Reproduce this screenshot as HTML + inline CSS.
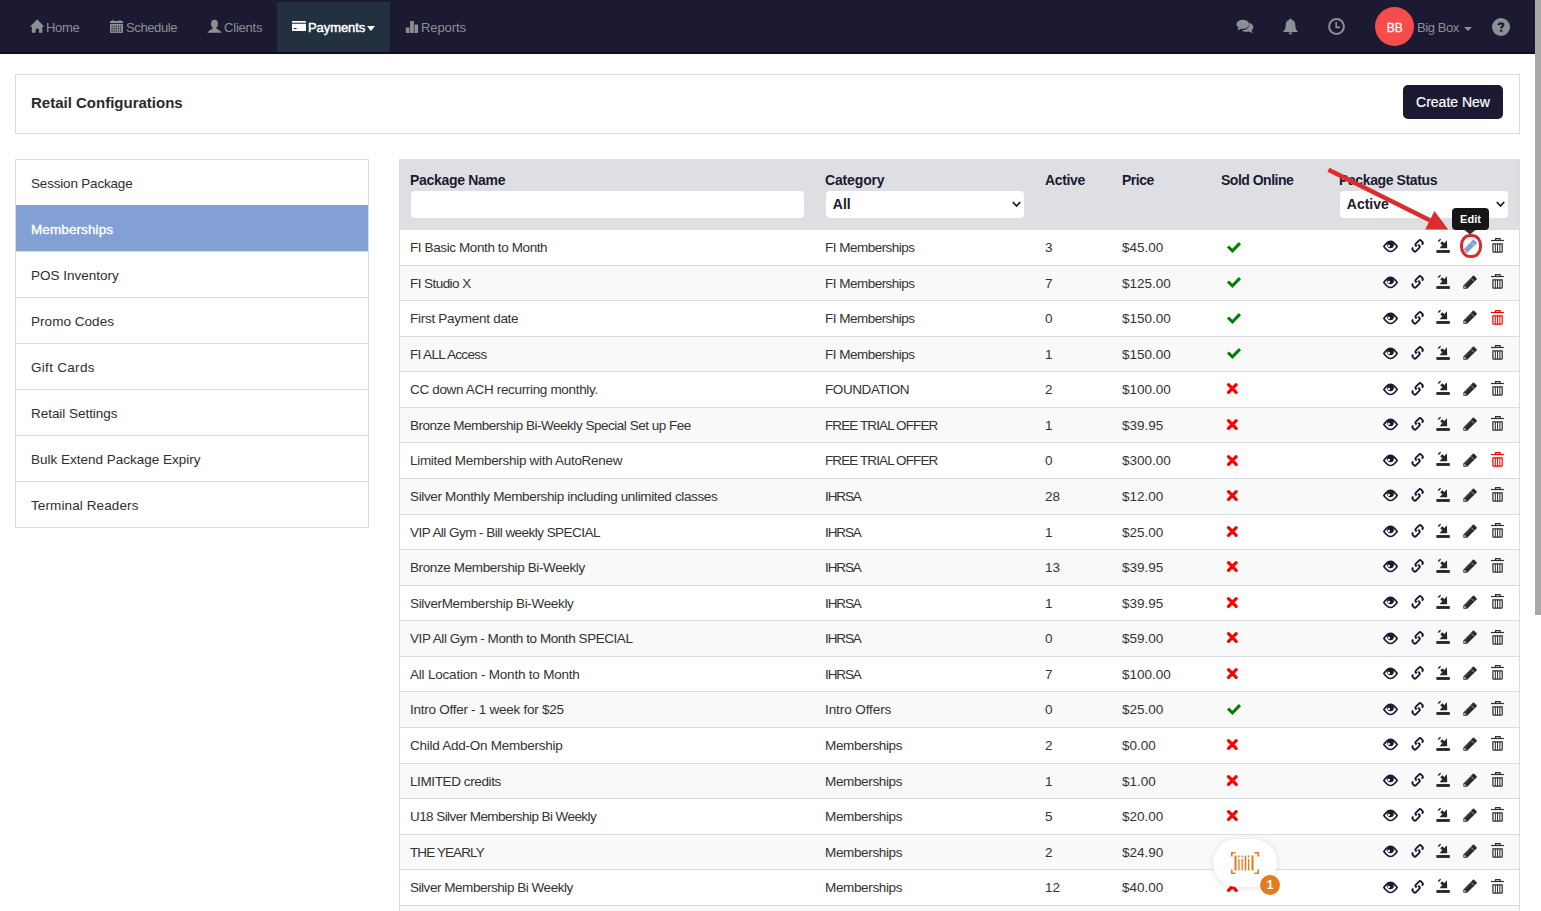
<!DOCTYPE html><html><head><meta charset="utf-8"><style>
*{box-sizing:border-box}
html,body{margin:0;padding:0}
body{width:1541px;height:911px;overflow:hidden;position:relative;background:#fff;font-family:"Liberation Sans",sans-serif;color:#333}
.abs{position:absolute}
#nav{left:0;top:0;width:1535px;height:54px;background:#1b1a32;border-bottom:2px solid #0e0d22}
#paytab{left:277px;top:2px;width:113px;height:50px;background:#22303f}
.nt{position:absolute;font-size:13px;color:#8c8f94;white-space:nowrap;line-height:16px}
#scroll{left:1535px;top:0;width:6px;height:615px;background:#a9a9a9}
#card{left:15px;top:74px;width:1505px;height:60px;border:1px solid #dcdcdc;background:#fff}
#title{left:31px;top:93px;font-size:15px;font-weight:bold;color:#2a2a2a;line-height:20px;white-space:nowrap}
#btn{left:1403px;top:85px;width:100px;height:34px;background:#1b1a32;border-radius:5px;color:#fff;font-size:14px;line-height:34px;text-align:center;-webkit-text-stroke:0.2px #fff}
#side{left:15px;top:159px;width:354px;height:369px;border:1px solid #dcdcdc}
.si{position:absolute;left:0;width:352px;height:46px;border-top:1px solid #dcdcdc;padding-left:15px;padding-top:1px;font-size:13.5px;line-height:46px;color:#2e2e2e;white-space:nowrap}
.si.act{background:#82a0d4;color:#fff;border-top-color:#82a0d4;-webkit-text-stroke:0.35px #fff}
#tbl{left:399px;top:159px;width:1121px;height:760px;border-left:1px solid #dcdcdc;border-right:1px solid #dcdcdc}
#thead{position:absolute;left:0;top:0;width:1119px;height:70.8px;background:#dedfe3}
.th{position:absolute;top:13px;font-size:14px;font-weight:bold;color:#1b1a32;line-height:16px;white-space:nowrap;letter-spacing:-0.1px}
.inp{position:absolute;top:32px;height:27px;background:#fff;border-radius:4px}
.sel{font-size:14px;font-weight:bold;color:#1b1a32;line-height:27px;padding-left:6.8px}
.row{position:absolute;left:0;width:1119px;height:35.5625px;border-top:1px solid #dcdcdc}
.row.odd{background:#f9f9f9}
.td{position:absolute;top:0;font-size:13.5px;line-height:34.5px;color:#333;white-space:nowrap}
.ic{position:absolute}
</style></head><body>
<div id="nav" class="abs"></div><div id="paytab" class="abs"></div>
<svg class="abs" style="left:29px;top:19px" width="17" height="15" viewBox="0 0 17 15"><path d="M0.95 7.65 L8.33 0.27 L15.18 7.65 L13.3 7.65 L13.3 13.84 L9.9 13.84 L9.9 9.75 L6.75 9.75 L6.75 13.84 L2.8 13.84 L2.8 7.65 Z" fill="#8c8f94"/></svg>
<div class="nt" style="left:46px;top:20px;letter-spacing:-0.3px">Home</div>
<svg class="abs" style="left:110px;top:20px" width="13" height="13" viewBox="0 0 13 13"><rect x="2.3" y="0" width="1.4" height="1.2" fill="#8c8f94"/><rect x="9.3" y="0" width="1.4" height="1.2" fill="#8c8f94"/><rect x="0" y="1.0" width="13" height="2" fill="#8c8f94"/><rect x="0" y="3.9" width="13" height="9" fill="#8c8f94"/><g fill="#1b1a32" opacity="0.75"><rect x="1.40" y="5.7" width="1.3" height="1.5"/><rect x="1.40" y="8.0" width="1.3" height="1.5"/><rect x="1.40" y="10.3" width="1.3" height="1.5"/><rect x="3.55" y="5.7" width="1.3" height="1.5"/><rect x="3.55" y="8.0" width="1.3" height="1.5"/><rect x="3.55" y="10.3" width="1.3" height="1.5"/><rect x="5.70" y="5.7" width="1.3" height="1.5"/><rect x="5.70" y="8.0" width="1.3" height="1.5"/><rect x="5.70" y="10.3" width="1.3" height="1.5"/><rect x="7.85" y="5.7" width="1.3" height="1.5"/><rect x="7.85" y="8.0" width="1.3" height="1.5"/><rect x="7.85" y="10.3" width="1.3" height="1.5"/><rect x="10.00" y="5.7" width="1.3" height="1.5"/><rect x="10.00" y="8.0" width="1.3" height="1.5"/><rect x="10.00" y="10.3" width="1.3" height="1.5"/></g></svg>
<div class="nt" style="left:126px;top:20px;letter-spacing:-0.39px">Schedule</div>
<svg class="abs" style="left:207px;top:19px" width="15" height="14" viewBox="0 0 15 14"><ellipse cx="7.5" cy="4.9" rx="3.4" ry="4.1" fill="#8c8f94"/><rect x="5.6" y="7" width="3.8" height="3.5" fill="#8c8f94"/><path d="M0.6 13.8 L0.7 13.1 L4.6 9.9 L10.4 9.9 L14.3 13.1 L14.4 13.8 Z" fill="#8c8f94"/></svg>
<div class="nt" style="left:224px;top:20px;letter-spacing:-0.2px">Clients</div>
<svg class="abs" style="left:292px;top:21px" width="14" height="10" viewBox="0 0 14 10"><rect x="0" y="0" width="14" height="10" rx="0.6" fill="#fff"/><rect x="0" y="1.6" width="14" height="1.3" fill="#22303f" opacity="0.85"/><rect x="1.6" y="7" width="3" height="1.1" fill="#22303f"/></svg>
<div class="nt" style="left:308px;top:20px;color:#fff;font-weight:normal;-webkit-text-stroke:0.45px #fff;letter-spacing:-0.07px">Payments</div>
<svg class="abs" style="left:367px;top:26px" width="8" height="5" viewBox="0 0 8 5"><path d="M0 0 H8 L4 5 Z" fill="#fff"/></svg>
<svg class="abs" style="left:405px;top:20px" width="14" height="13" viewBox="0 0 14 13"><rect x="0.8" y="7.5" width="3.7" height="5.4" rx="0.6" fill="#8c8f94"/><rect x="5.1" y="0.9" width="3.7" height="12" rx="0.6" fill="#8c8f94"/><rect x="9.4" y="4.4" width="3.7" height="8.5" rx="0.6" fill="#8c8f94"/></svg>
<div class="nt" style="left:421px;top:20px;letter-spacing:-0.08px">Reports</div>
<svg class="abs" style="left:1236px;top:18.5px" width="18" height="15" viewBox="0 0 18 15"><ellipse cx="6.8" cy="5.3" rx="6.3" ry="4.6" fill="#8c8f94"/><path d="M2.5 8.5 L1.5 11.5 L5.5 9.5 Z" fill="#8c8f94"/><path d="M13.3 3.8 C15.8 4.6 17.3 6.4 17.3 8.3 C17.3 9.6 16.6 10.8 15.4 11.6 L16.6 14.2 L12.9 12.4 C12 12.7 11 12.8 10 12.8 C8.3 12.8 6.7 12.3 5.6 11.5 C10.5 11.3 13.8 8.5 13.3 3.8 Z" fill="#8c8f94"/></svg>
<svg class="abs" style="left:1282px;top:18px" width="17" height="17" viewBox="0 0 17 17"><path d="M8.5 0.4 C9.1 0.4 9.4 0.9 9.4 1.4 C12 2 13.3 4 13.3 7 C13.3 10.5 14.2 12.3 16.4 14 L0.6 14 C2.8 12.3 3.7 10.5 3.7 7 C3.7 4 5 2 7.6 1.4 C7.6 0.9 7.9 0.4 8.5 0.4 Z" fill="#8c8f94"/><path d="M6.6 14.6 C6.8 15.8 7.6 16.5 8.5 16.5 C9.4 16.5 10.2 15.8 10.4 14.6 Z" fill="#8c8f94"/></svg>
<svg class="abs" style="left:1328px;top:18px" width="17" height="17" viewBox="0 0 17 17"><circle cx="8.5" cy="8.5" r="7.4" fill="none" stroke="#8c8f94" stroke-width="2"/><path d="M8.2 4 V9.4 H12" fill="none" stroke="#8c8f94" stroke-width="1.6"/></svg>
<div class="abs" style="left:1375px;top:7px;width:39px;height:39px;border-radius:50%;background:#f44d4b"></div>
<div class="abs" style="left:1375px;top:8.5px;width:39.5px;line-height:39px;text-align:center;color:#fff;font-size:12px;letter-spacing:0px;-webkit-text-stroke:0.3px #fff">BB</div>
<div class="nt" style="left:1417px;top:20px;letter-spacing:-0.43px">Big Box</div>
<svg class="abs" style="left:1464px;top:27px" width="8" height="4" viewBox="0 0 8 4"><path d="M0 0 H8 L4 4 Z" fill="#8c8f94"/></svg>
<svg class="abs" style="left:1492px;top:18px" width="18" height="18" viewBox="0 0 18 18"><circle cx="9" cy="9" r="9" fill="#8c8f94"/><path d="M6.5 7.2 C6.6 5.9 7.7 5.3 9 5.3 C10.4 5.3 11.3 6 11.3 7 C11.3 8.3 9.3 8.5 9.1 10.3" fill="none" stroke="#1b1a32" stroke-width="2.2"/><rect x="7.9" y="11.8" width="2.5" height="1.9" fill="#1b1a32"/></svg>
<div id="scroll" class="abs"></div>
<div id="card" class="abs"></div><div id="title" class="abs">Retail Configurations</div>
<div id="btn" class="abs">Create New</div>
<div id="side" class="abs">
<div class="si" style="top:-1px;letter-spacing:-0.19px;border-top-color:transparent">Session Package</div>
<div class="si act" style="top:45px;letter-spacing:0.1px">Memberships</div>
<div class="si" style="top:91px;letter-spacing:0px">POS Inventory</div>
<div class="si" style="top:137px;letter-spacing:0.04px">Promo Codes</div>
<div class="si" style="top:183px;letter-spacing:0.3px">Gift Cards</div>
<div class="si" style="top:229px;letter-spacing:-0.04px">Retail Settings</div>
<div class="si" style="top:275px;letter-spacing:0px">Bulk Extend Package Expiry</div>
<div class="si" style="top:321px;letter-spacing:0.11px">Terminal Readers</div>
</div>
<div id="tbl" class="abs">
<div id="thead">
<div class="th" style="left:10px;letter-spacing:-0.3px">Package Name</div>
<div class="th" style="left:425px;letter-spacing:-0.15px">Category</div>
<div class="th" style="left:645px;letter-spacing:-0.36px">Active</div>
<div class="th" style="left:722px;letter-spacing:-0.5px">Price</div>
<div class="th" style="left:821px;letter-spacing:-0.5px">Sold Online</div>
<div class="th" style="left:939px;letter-spacing:-0.39px">Package Status</div>
<div class="inp" style="left:11px;width:393px"></div>
<div class="inp sel" style="left:426px;width:198px">All</div>
<svg class="abs" style="left:612px;top:42px" width="9" height="7" viewBox="0 0 9 7"><path d="M0.8 1 L4.5 5 L8.2 1" fill="none" stroke="#1b1a32" stroke-width="1.8"/></svg>
<div class="inp sel" style="left:940px;width:168px">Active</div>
<svg class="abs" style="left:1096px;top:42px" width="9" height="7" viewBox="0 0 9 7"><path d="M0.8 1 L4.5 5 L8.2 1" fill="none" stroke="#1b1a32" stroke-width="1.8"/></svg>
</div>
<div class="row" style="top:70.800px;border-top-color:transparent">
<div class="td" style="left:10px;top:0px;letter-spacing:-0.395px">FI Basic Month to Month</div>
<div class="td" style="left:425px;top:0px;letter-spacing:-0.515px">FI Memberships</div>
<div class="td" style="left:645px;top:0px;letter-spacing:0px">3</div>
<div class="td" style="left:722px;top:0px;letter-spacing:0px">$45.00</div>
<svg class="ic" style="left:822px;top:4.90px" width="20" height="20" viewBox="0 0 20 20"><path d="M4.9 11.4 L7.0 9.5 L10.4 12.8 L16.8 6.1 L19 8.3 L10.4 16.9 Z" fill="#008000"/></svg>
<svg class="ic" style="left:982px;top:9.60px" width="17" height="13" viewBox="0 0 17 13"><path d="M1.8 6.5 C4 3.5 6 1.42 8.5 1.42 C11 1.42 13 3.5 15.2 6.5 C13 9.5 11 11.57 8.5 11.57 C6 11.57 4 9.5 1.8 6.5 Z" fill="none" stroke="#1b1a32" stroke-width="1.6" stroke-linejoin="round"/><circle cx="8.5" cy="4.8" r="3.4" fill="#1b1a32"/><circle cx="6.9" cy="5.9" r="1.1" fill="#fff"/></svg>
<svg class="ic" style="left:1010px;top:8.60px" width="15" height="15" viewBox="0 0 15 15"><g fill="none" stroke="#1b1a32" stroke-width="1.6" stroke-linecap="butt" transform="translate(7.58 7.41) scale(1.2) translate(-7.5 -7.73)"><path d="M6.72 7.78 L6.14 7.20 Q5.22 6.28 6.14 5.36 L8.62 2.89 Q9.54 1.97 10.46 2.89 L11.47 3.90 Q12.39 4.82 11.47 5.74 L11.00 6.20"/><path d="M8.00 6.29 L8.87 7.15 Q9.79 8.06 8.87 8.98 L6.23 11.62 Q5.31 12.54 4.39 11.62 L3.54 10.77 Q2.62 9.85 3.54 8.93 L3.84 8.64"/></g></svg>
<svg class="ic" style="left:1034px;top:5.30px" width="18" height="18" viewBox="0 0 18 18"><g fill="#262626"><path d="M3.7 5.1 L6.1 2.7 L7.1 3.7 L4.7 6.1 Z"/><path d="M6.26 7.35 L8.38 5.23 L10.58 7.43 L8.46 9.55 Z"/><path d="M12.9 4.3 L13.2 12.2 L5.5 12.2 Z"/><rect x="2.4" y="14.05" width="13.4" height="2.85"/></g></svg>
<svg class="ic" style="left:1060px;top:5.50px" width="18" height="18" viewBox="0 0 18 18"><path d="M3.4 13.4 L12.9 3.8 Q13.5 3.3 14.1 3.8 L16.6 6.3 Q17.1 6.9 16.6 7.5 L7.2 16.8 L3.4 16.8 Z" fill="#7f9fd9"/><path d="M11.1 6.4 L14.1 9.4" stroke="#fff" stroke-width="0.7" opacity="0.8"/><path d="M5.4 12.8 L11 7.2" stroke="#fff" stroke-width="0.6" stroke-dasharray="0.8 0.8" opacity="0.6"/><path d="M4.3 13.6 L6.5 15.8 L4.3 15.8 Z" fill="#fff" opacity="0.9"/></svg>
<svg class="ic" style="left:1087px;top:3.60px" width="20" height="20" viewBox="0 0 20 20"><g fill="none" stroke="#2e2e2e" stroke-width="1.2"><path d="M4.0 6.5 H16.9"/><path d="M8.6 6.5 V4.6 H13.1 V6.5"/><path d="M5.9 9.8 H15.2 V17.4 Q15.2 18.1 14.5 18.1 H6.6 Q5.9 18.1 5.9 17.4 Z"/><path d="M8.3 10 V18 M10.55 10 V18 M12.85 10 V18" stroke-width="1"/></g></svg>
</div>
<div class="row odd" style="top:105.662px">
<div class="td" style="left:10px;top:1px;letter-spacing:-0.56px">FI Studio X</div>
<div class="td" style="left:425px;top:1px;letter-spacing:-0.515px">FI Memberships</div>
<div class="td" style="left:645px;top:1px;letter-spacing:0px">7</div>
<div class="td" style="left:722px;top:1px;letter-spacing:0px">$125.00</div>
<svg class="ic" style="left:822px;top:5.60px" width="20" height="20" viewBox="0 0 20 20"><path d="M4.9 11.4 L7.0 9.5 L10.4 12.8 L16.8 6.1 L19 8.3 L10.4 16.9 Z" fill="#008000"/></svg>
<svg class="ic" style="left:982px;top:10.30px" width="17" height="13" viewBox="0 0 17 13"><path d="M1.8 6.5 C4 3.5 6 1.42 8.5 1.42 C11 1.42 13 3.5 15.2 6.5 C13 9.5 11 11.57 8.5 11.57 C6 11.57 4 9.5 1.8 6.5 Z" fill="none" stroke="#1b1a32" stroke-width="1.6" stroke-linejoin="round"/><circle cx="8.5" cy="4.8" r="3.4" fill="#1b1a32"/><circle cx="6.9" cy="5.9" r="1.1" fill="#fff"/></svg>
<svg class="ic" style="left:1010px;top:9.30px" width="15" height="15" viewBox="0 0 15 15"><g fill="none" stroke="#1b1a32" stroke-width="1.6" stroke-linecap="butt" transform="translate(7.58 7.41) scale(1.2) translate(-7.5 -7.73)"><path d="M6.72 7.78 L6.14 7.20 Q5.22 6.28 6.14 5.36 L8.62 2.89 Q9.54 1.97 10.46 2.89 L11.47 3.90 Q12.39 4.82 11.47 5.74 L11.00 6.20"/><path d="M8.00 6.29 L8.87 7.15 Q9.79 8.06 8.87 8.98 L6.23 11.62 Q5.31 12.54 4.39 11.62 L3.54 10.77 Q2.62 9.85 3.54 8.93 L3.84 8.64"/></g></svg>
<svg class="ic" style="left:1034px;top:6.00px" width="18" height="18" viewBox="0 0 18 18"><g fill="#262626"><path d="M3.7 5.1 L6.1 2.7 L7.1 3.7 L4.7 6.1 Z"/><path d="M6.26 7.35 L8.38 5.23 L10.58 7.43 L8.46 9.55 Z"/><path d="M12.9 4.3 L13.2 12.2 L5.5 12.2 Z"/><rect x="2.4" y="14.05" width="13.4" height="2.85"/></g></svg>
<svg class="ic" style="left:1060px;top:6.20px" width="18" height="18" viewBox="0 0 18 18"><path d="M3.4 13.4 L12.9 3.8 Q13.5 3.3 14.1 3.8 L16.6 6.3 Q17.1 6.9 16.6 7.5 L7.2 16.8 L3.4 16.8 Z" fill="#2b2b2b"/><path d="M11.1 6.4 L14.1 9.4" stroke="#fff" stroke-width="0.7" opacity="0.8"/><path d="M5.4 12.8 L11 7.2" stroke="#fff" stroke-width="0.6" stroke-dasharray="0.8 0.8" opacity="0.6"/><path d="M4.3 13.6 L6.5 15.8 L4.3 15.8 Z" fill="#fff" opacity="0.9"/></svg>
<svg class="ic" style="left:1087px;top:4.30px" width="20" height="20" viewBox="0 0 20 20"><g fill="none" stroke="#2e2e2e" stroke-width="1.2"><path d="M4.0 6.5 H16.9"/><path d="M8.6 6.5 V4.6 H13.1 V6.5"/><path d="M5.9 9.8 H15.2 V17.4 Q15.2 18.1 14.5 18.1 H6.6 Q5.9 18.1 5.9 17.4 Z"/><path d="M8.3 10 V18 M10.55 10 V18 M12.85 10 V18" stroke-width="1"/></g></svg>
</div>
<div class="row" style="top:141.225px">
<div class="td" style="left:10px;top:1px;letter-spacing:-0.276px">First Payment date</div>
<div class="td" style="left:425px;top:1px;letter-spacing:-0.515px">FI Memberships</div>
<div class="td" style="left:645px;top:1px;letter-spacing:0px">0</div>
<div class="td" style="left:722px;top:1px;letter-spacing:0px">$150.00</div>
<svg class="ic" style="left:822px;top:5.60px" width="20" height="20" viewBox="0 0 20 20"><path d="M4.9 11.4 L7.0 9.5 L10.4 12.8 L16.8 6.1 L19 8.3 L10.4 16.9 Z" fill="#008000"/></svg>
<svg class="ic" style="left:982px;top:10.30px" width="17" height="13" viewBox="0 0 17 13"><path d="M1.8 6.5 C4 3.5 6 1.42 8.5 1.42 C11 1.42 13 3.5 15.2 6.5 C13 9.5 11 11.57 8.5 11.57 C6 11.57 4 9.5 1.8 6.5 Z" fill="none" stroke="#1b1a32" stroke-width="1.6" stroke-linejoin="round"/><circle cx="8.5" cy="4.8" r="3.4" fill="#1b1a32"/><circle cx="6.9" cy="5.9" r="1.1" fill="#fff"/></svg>
<svg class="ic" style="left:1010px;top:9.30px" width="15" height="15" viewBox="0 0 15 15"><g fill="none" stroke="#1b1a32" stroke-width="1.6" stroke-linecap="butt" transform="translate(7.58 7.41) scale(1.2) translate(-7.5 -7.73)"><path d="M6.72 7.78 L6.14 7.20 Q5.22 6.28 6.14 5.36 L8.62 2.89 Q9.54 1.97 10.46 2.89 L11.47 3.90 Q12.39 4.82 11.47 5.74 L11.00 6.20"/><path d="M8.00 6.29 L8.87 7.15 Q9.79 8.06 8.87 8.98 L6.23 11.62 Q5.31 12.54 4.39 11.62 L3.54 10.77 Q2.62 9.85 3.54 8.93 L3.84 8.64"/></g></svg>
<svg class="ic" style="left:1034px;top:6.00px" width="18" height="18" viewBox="0 0 18 18"><g fill="#262626"><path d="M3.7 5.1 L6.1 2.7 L7.1 3.7 L4.7 6.1 Z"/><path d="M6.26 7.35 L8.38 5.23 L10.58 7.43 L8.46 9.55 Z"/><path d="M12.9 4.3 L13.2 12.2 L5.5 12.2 Z"/><rect x="2.4" y="14.05" width="13.4" height="2.85"/></g></svg>
<svg class="ic" style="left:1060px;top:6.20px" width="18" height="18" viewBox="0 0 18 18"><path d="M3.4 13.4 L12.9 3.8 Q13.5 3.3 14.1 3.8 L16.6 6.3 Q17.1 6.9 16.6 7.5 L7.2 16.8 L3.4 16.8 Z" fill="#2b2b2b"/><path d="M11.1 6.4 L14.1 9.4" stroke="#fff" stroke-width="0.7" opacity="0.8"/><path d="M5.4 12.8 L11 7.2" stroke="#fff" stroke-width="0.6" stroke-dasharray="0.8 0.8" opacity="0.6"/><path d="M4.3 13.6 L6.5 15.8 L4.3 15.8 Z" fill="#fff" opacity="0.9"/></svg>
<svg class="ic" style="left:1087px;top:4.30px" width="20" height="20" viewBox="0 0 20 20"><g fill="none" stroke="#ff0000" stroke-width="1.2"><path d="M4.0 6.5 H16.9"/><path d="M8.6 6.5 V4.6 H13.1 V6.5"/><path d="M5.9 9.8 H15.2 V17.4 Q15.2 18.1 14.5 18.1 H6.6 Q5.9 18.1 5.9 17.4 Z"/><path d="M8.3 10 V18 M10.55 10 V18 M12.85 10 V18" stroke-width="1"/></g></svg>
</div>
<div class="row odd" style="top:176.787px">
<div class="td" style="left:10px;top:1px;letter-spacing:-0.658px">FI ALL Access</div>
<div class="td" style="left:425px;top:1px;letter-spacing:-0.515px">FI Memberships</div>
<div class="td" style="left:645px;top:1px;letter-spacing:0px">1</div>
<div class="td" style="left:722px;top:1px;letter-spacing:0px">$150.00</div>
<svg class="ic" style="left:822px;top:5.60px" width="20" height="20" viewBox="0 0 20 20"><path d="M4.9 11.4 L7.0 9.5 L10.4 12.8 L16.8 6.1 L19 8.3 L10.4 16.9 Z" fill="#008000"/></svg>
<svg class="ic" style="left:982px;top:10.30px" width="17" height="13" viewBox="0 0 17 13"><path d="M1.8 6.5 C4 3.5 6 1.42 8.5 1.42 C11 1.42 13 3.5 15.2 6.5 C13 9.5 11 11.57 8.5 11.57 C6 11.57 4 9.5 1.8 6.5 Z" fill="none" stroke="#1b1a32" stroke-width="1.6" stroke-linejoin="round"/><circle cx="8.5" cy="4.8" r="3.4" fill="#1b1a32"/><circle cx="6.9" cy="5.9" r="1.1" fill="#fff"/></svg>
<svg class="ic" style="left:1010px;top:9.30px" width="15" height="15" viewBox="0 0 15 15"><g fill="none" stroke="#1b1a32" stroke-width="1.6" stroke-linecap="butt" transform="translate(7.58 7.41) scale(1.2) translate(-7.5 -7.73)"><path d="M6.72 7.78 L6.14 7.20 Q5.22 6.28 6.14 5.36 L8.62 2.89 Q9.54 1.97 10.46 2.89 L11.47 3.90 Q12.39 4.82 11.47 5.74 L11.00 6.20"/><path d="M8.00 6.29 L8.87 7.15 Q9.79 8.06 8.87 8.98 L6.23 11.62 Q5.31 12.54 4.39 11.62 L3.54 10.77 Q2.62 9.85 3.54 8.93 L3.84 8.64"/></g></svg>
<svg class="ic" style="left:1034px;top:6.00px" width="18" height="18" viewBox="0 0 18 18"><g fill="#262626"><path d="M3.7 5.1 L6.1 2.7 L7.1 3.7 L4.7 6.1 Z"/><path d="M6.26 7.35 L8.38 5.23 L10.58 7.43 L8.46 9.55 Z"/><path d="M12.9 4.3 L13.2 12.2 L5.5 12.2 Z"/><rect x="2.4" y="14.05" width="13.4" height="2.85"/></g></svg>
<svg class="ic" style="left:1060px;top:6.20px" width="18" height="18" viewBox="0 0 18 18"><path d="M3.4 13.4 L12.9 3.8 Q13.5 3.3 14.1 3.8 L16.6 6.3 Q17.1 6.9 16.6 7.5 L7.2 16.8 L3.4 16.8 Z" fill="#2b2b2b"/><path d="M11.1 6.4 L14.1 9.4" stroke="#fff" stroke-width="0.7" opacity="0.8"/><path d="M5.4 12.8 L11 7.2" stroke="#fff" stroke-width="0.6" stroke-dasharray="0.8 0.8" opacity="0.6"/><path d="M4.3 13.6 L6.5 15.8 L4.3 15.8 Z" fill="#fff" opacity="0.9"/></svg>
<svg class="ic" style="left:1087px;top:4.30px" width="20" height="20" viewBox="0 0 20 20"><g fill="none" stroke="#2e2e2e" stroke-width="1.2"><path d="M4.0 6.5 H16.9"/><path d="M8.6 6.5 V4.6 H13.1 V6.5"/><path d="M5.9 9.8 H15.2 V17.4 Q15.2 18.1 14.5 18.1 H6.6 Q5.9 18.1 5.9 17.4 Z"/><path d="M8.3 10 V18 M10.55 10 V18 M12.85 10 V18" stroke-width="1"/></g></svg>
</div>
<div class="row" style="top:212.350px">
<div class="td" style="left:10px;top:1px;letter-spacing:-0.334px">CC down ACH recurring monthly.</div>
<div class="td" style="left:425px;top:1px;letter-spacing:-0.411px">FOUNDATION</div>
<div class="td" style="left:645px;top:1px;letter-spacing:0px">2</div>
<div class="td" style="left:722px;top:1px;letter-spacing:0px">$100.00</div>
<svg class="ic" style="left:822px;top:6.10px" width="20" height="20" viewBox="0 0 20 20"><path d="M6.5 6.7 L14.2 14.4 M14.2 6.7 L6.5 14.4" fill="none" stroke="#ff0000" stroke-width="3.2" stroke-linecap="round"/></svg>
<svg class="ic" style="left:982px;top:10.30px" width="17" height="13" viewBox="0 0 17 13"><path d="M1.8 6.5 C4 3.5 6 1.42 8.5 1.42 C11 1.42 13 3.5 15.2 6.5 C13 9.5 11 11.57 8.5 11.57 C6 11.57 4 9.5 1.8 6.5 Z" fill="none" stroke="#1b1a32" stroke-width="1.6" stroke-linejoin="round"/><circle cx="8.5" cy="4.8" r="3.4" fill="#1b1a32"/><circle cx="6.9" cy="5.9" r="1.1" fill="#fff"/></svg>
<svg class="ic" style="left:1010px;top:9.30px" width="15" height="15" viewBox="0 0 15 15"><g fill="none" stroke="#1b1a32" stroke-width="1.6" stroke-linecap="butt" transform="translate(7.58 7.41) scale(1.2) translate(-7.5 -7.73)"><path d="M6.72 7.78 L6.14 7.20 Q5.22 6.28 6.14 5.36 L8.62 2.89 Q9.54 1.97 10.46 2.89 L11.47 3.90 Q12.39 4.82 11.47 5.74 L11.00 6.20"/><path d="M8.00 6.29 L8.87 7.15 Q9.79 8.06 8.87 8.98 L6.23 11.62 Q5.31 12.54 4.39 11.62 L3.54 10.77 Q2.62 9.85 3.54 8.93 L3.84 8.64"/></g></svg>
<svg class="ic" style="left:1034px;top:6.00px" width="18" height="18" viewBox="0 0 18 18"><g fill="#262626"><path d="M3.7 5.1 L6.1 2.7 L7.1 3.7 L4.7 6.1 Z"/><path d="M6.26 7.35 L8.38 5.23 L10.58 7.43 L8.46 9.55 Z"/><path d="M12.9 4.3 L13.2 12.2 L5.5 12.2 Z"/><rect x="2.4" y="14.05" width="13.4" height="2.85"/></g></svg>
<svg class="ic" style="left:1060px;top:6.20px" width="18" height="18" viewBox="0 0 18 18"><path d="M3.4 13.4 L12.9 3.8 Q13.5 3.3 14.1 3.8 L16.6 6.3 Q17.1 6.9 16.6 7.5 L7.2 16.8 L3.4 16.8 Z" fill="#2b2b2b"/><path d="M11.1 6.4 L14.1 9.4" stroke="#fff" stroke-width="0.7" opacity="0.8"/><path d="M5.4 12.8 L11 7.2" stroke="#fff" stroke-width="0.6" stroke-dasharray="0.8 0.8" opacity="0.6"/><path d="M4.3 13.6 L6.5 15.8 L4.3 15.8 Z" fill="#fff" opacity="0.9"/></svg>
<svg class="ic" style="left:1087px;top:4.30px" width="20" height="20" viewBox="0 0 20 20"><g fill="none" stroke="#2e2e2e" stroke-width="1.2"><path d="M4.0 6.5 H16.9"/><path d="M8.6 6.5 V4.6 H13.1 V6.5"/><path d="M5.9 9.8 H15.2 V17.4 Q15.2 18.1 14.5 18.1 H6.6 Q5.9 18.1 5.9 17.4 Z"/><path d="M8.3 10 V18 M10.55 10 V18 M12.85 10 V18" stroke-width="1"/></g></svg>
</div>
<div class="row odd" style="top:247.912px">
<div class="td" style="left:10px;top:1px;letter-spacing:-0.478px">Bronze Membership Bi-Weekly Special Set up Fee</div>
<div class="td" style="left:425px;top:1px;letter-spacing:-0.9px">FREE TRIAL OFFER</div>
<div class="td" style="left:645px;top:1px;letter-spacing:0px">1</div>
<div class="td" style="left:722px;top:1px;letter-spacing:0px">$39.95</div>
<svg class="ic" style="left:822px;top:6.10px" width="20" height="20" viewBox="0 0 20 20"><path d="M6.5 6.7 L14.2 14.4 M14.2 6.7 L6.5 14.4" fill="none" stroke="#ff0000" stroke-width="3.2" stroke-linecap="round"/></svg>
<svg class="ic" style="left:982px;top:10.30px" width="17" height="13" viewBox="0 0 17 13"><path d="M1.8 6.5 C4 3.5 6 1.42 8.5 1.42 C11 1.42 13 3.5 15.2 6.5 C13 9.5 11 11.57 8.5 11.57 C6 11.57 4 9.5 1.8 6.5 Z" fill="none" stroke="#1b1a32" stroke-width="1.6" stroke-linejoin="round"/><circle cx="8.5" cy="4.8" r="3.4" fill="#1b1a32"/><circle cx="6.9" cy="5.9" r="1.1" fill="#fff"/></svg>
<svg class="ic" style="left:1010px;top:9.30px" width="15" height="15" viewBox="0 0 15 15"><g fill="none" stroke="#1b1a32" stroke-width="1.6" stroke-linecap="butt" transform="translate(7.58 7.41) scale(1.2) translate(-7.5 -7.73)"><path d="M6.72 7.78 L6.14 7.20 Q5.22 6.28 6.14 5.36 L8.62 2.89 Q9.54 1.97 10.46 2.89 L11.47 3.90 Q12.39 4.82 11.47 5.74 L11.00 6.20"/><path d="M8.00 6.29 L8.87 7.15 Q9.79 8.06 8.87 8.98 L6.23 11.62 Q5.31 12.54 4.39 11.62 L3.54 10.77 Q2.62 9.85 3.54 8.93 L3.84 8.64"/></g></svg>
<svg class="ic" style="left:1034px;top:6.00px" width="18" height="18" viewBox="0 0 18 18"><g fill="#262626"><path d="M3.7 5.1 L6.1 2.7 L7.1 3.7 L4.7 6.1 Z"/><path d="M6.26 7.35 L8.38 5.23 L10.58 7.43 L8.46 9.55 Z"/><path d="M12.9 4.3 L13.2 12.2 L5.5 12.2 Z"/><rect x="2.4" y="14.05" width="13.4" height="2.85"/></g></svg>
<svg class="ic" style="left:1060px;top:6.20px" width="18" height="18" viewBox="0 0 18 18"><path d="M3.4 13.4 L12.9 3.8 Q13.5 3.3 14.1 3.8 L16.6 6.3 Q17.1 6.9 16.6 7.5 L7.2 16.8 L3.4 16.8 Z" fill="#2b2b2b"/><path d="M11.1 6.4 L14.1 9.4" stroke="#fff" stroke-width="0.7" opacity="0.8"/><path d="M5.4 12.8 L11 7.2" stroke="#fff" stroke-width="0.6" stroke-dasharray="0.8 0.8" opacity="0.6"/><path d="M4.3 13.6 L6.5 15.8 L4.3 15.8 Z" fill="#fff" opacity="0.9"/></svg>
<svg class="ic" style="left:1087px;top:4.30px" width="20" height="20" viewBox="0 0 20 20"><g fill="none" stroke="#2e2e2e" stroke-width="1.2"><path d="M4.0 6.5 H16.9"/><path d="M8.6 6.5 V4.6 H13.1 V6.5"/><path d="M5.9 9.8 H15.2 V17.4 Q15.2 18.1 14.5 18.1 H6.6 Q5.9 18.1 5.9 17.4 Z"/><path d="M8.3 10 V18 M10.55 10 V18 M12.85 10 V18" stroke-width="1"/></g></svg>
</div>
<div class="row" style="top:283.475px">
<div class="td" style="left:10px;top:1px;letter-spacing:-0.303px">Limited Membership with AutoRenew</div>
<div class="td" style="left:425px;top:1px;letter-spacing:-0.9px">FREE TRIAL OFFER</div>
<div class="td" style="left:645px;top:1px;letter-spacing:0px">0</div>
<div class="td" style="left:722px;top:1px;letter-spacing:0px">$300.00</div>
<svg class="ic" style="left:822px;top:6.10px" width="20" height="20" viewBox="0 0 20 20"><path d="M6.5 6.7 L14.2 14.4 M14.2 6.7 L6.5 14.4" fill="none" stroke="#ff0000" stroke-width="3.2" stroke-linecap="round"/></svg>
<svg class="ic" style="left:982px;top:10.30px" width="17" height="13" viewBox="0 0 17 13"><path d="M1.8 6.5 C4 3.5 6 1.42 8.5 1.42 C11 1.42 13 3.5 15.2 6.5 C13 9.5 11 11.57 8.5 11.57 C6 11.57 4 9.5 1.8 6.5 Z" fill="none" stroke="#1b1a32" stroke-width="1.6" stroke-linejoin="round"/><circle cx="8.5" cy="4.8" r="3.4" fill="#1b1a32"/><circle cx="6.9" cy="5.9" r="1.1" fill="#fff"/></svg>
<svg class="ic" style="left:1010px;top:9.30px" width="15" height="15" viewBox="0 0 15 15"><g fill="none" stroke="#1b1a32" stroke-width="1.6" stroke-linecap="butt" transform="translate(7.58 7.41) scale(1.2) translate(-7.5 -7.73)"><path d="M6.72 7.78 L6.14 7.20 Q5.22 6.28 6.14 5.36 L8.62 2.89 Q9.54 1.97 10.46 2.89 L11.47 3.90 Q12.39 4.82 11.47 5.74 L11.00 6.20"/><path d="M8.00 6.29 L8.87 7.15 Q9.79 8.06 8.87 8.98 L6.23 11.62 Q5.31 12.54 4.39 11.62 L3.54 10.77 Q2.62 9.85 3.54 8.93 L3.84 8.64"/></g></svg>
<svg class="ic" style="left:1034px;top:6.00px" width="18" height="18" viewBox="0 0 18 18"><g fill="#262626"><path d="M3.7 5.1 L6.1 2.7 L7.1 3.7 L4.7 6.1 Z"/><path d="M6.26 7.35 L8.38 5.23 L10.58 7.43 L8.46 9.55 Z"/><path d="M12.9 4.3 L13.2 12.2 L5.5 12.2 Z"/><rect x="2.4" y="14.05" width="13.4" height="2.85"/></g></svg>
<svg class="ic" style="left:1060px;top:6.20px" width="18" height="18" viewBox="0 0 18 18"><path d="M3.4 13.4 L12.9 3.8 Q13.5 3.3 14.1 3.8 L16.6 6.3 Q17.1 6.9 16.6 7.5 L7.2 16.8 L3.4 16.8 Z" fill="#2b2b2b"/><path d="M11.1 6.4 L14.1 9.4" stroke="#fff" stroke-width="0.7" opacity="0.8"/><path d="M5.4 12.8 L11 7.2" stroke="#fff" stroke-width="0.6" stroke-dasharray="0.8 0.8" opacity="0.6"/><path d="M4.3 13.6 L6.5 15.8 L4.3 15.8 Z" fill="#fff" opacity="0.9"/></svg>
<svg class="ic" style="left:1087px;top:4.30px" width="20" height="20" viewBox="0 0 20 20"><g fill="none" stroke="#ff0000" stroke-width="1.2"><path d="M4.0 6.5 H16.9"/><path d="M8.6 6.5 V4.6 H13.1 V6.5"/><path d="M5.9 9.8 H15.2 V17.4 Q15.2 18.1 14.5 18.1 H6.6 Q5.9 18.1 5.9 17.4 Z"/><path d="M8.3 10 V18 M10.55 10 V18 M12.85 10 V18" stroke-width="1"/></g></svg>
</div>
<div class="row odd" style="top:319.038px">
<div class="td" style="left:10px;top:1px;letter-spacing:-0.358px">Silver Monthly Membership including unlimited classes</div>
<div class="td" style="left:425px;top:1px;letter-spacing:-1.1px">IHRSA</div>
<div class="td" style="left:645px;top:1px;letter-spacing:0px">28</div>
<div class="td" style="left:722px;top:1px;letter-spacing:0px">$12.00</div>
<svg class="ic" style="left:822px;top:6.10px" width="20" height="20" viewBox="0 0 20 20"><path d="M6.5 6.7 L14.2 14.4 M14.2 6.7 L6.5 14.4" fill="none" stroke="#ff0000" stroke-width="3.2" stroke-linecap="round"/></svg>
<svg class="ic" style="left:982px;top:10.30px" width="17" height="13" viewBox="0 0 17 13"><path d="M1.8 6.5 C4 3.5 6 1.42 8.5 1.42 C11 1.42 13 3.5 15.2 6.5 C13 9.5 11 11.57 8.5 11.57 C6 11.57 4 9.5 1.8 6.5 Z" fill="none" stroke="#1b1a32" stroke-width="1.6" stroke-linejoin="round"/><circle cx="8.5" cy="4.8" r="3.4" fill="#1b1a32"/><circle cx="6.9" cy="5.9" r="1.1" fill="#fff"/></svg>
<svg class="ic" style="left:1010px;top:9.30px" width="15" height="15" viewBox="0 0 15 15"><g fill="none" stroke="#1b1a32" stroke-width="1.6" stroke-linecap="butt" transform="translate(7.58 7.41) scale(1.2) translate(-7.5 -7.73)"><path d="M6.72 7.78 L6.14 7.20 Q5.22 6.28 6.14 5.36 L8.62 2.89 Q9.54 1.97 10.46 2.89 L11.47 3.90 Q12.39 4.82 11.47 5.74 L11.00 6.20"/><path d="M8.00 6.29 L8.87 7.15 Q9.79 8.06 8.87 8.98 L6.23 11.62 Q5.31 12.54 4.39 11.62 L3.54 10.77 Q2.62 9.85 3.54 8.93 L3.84 8.64"/></g></svg>
<svg class="ic" style="left:1034px;top:6.00px" width="18" height="18" viewBox="0 0 18 18"><g fill="#262626"><path d="M3.7 5.1 L6.1 2.7 L7.1 3.7 L4.7 6.1 Z"/><path d="M6.26 7.35 L8.38 5.23 L10.58 7.43 L8.46 9.55 Z"/><path d="M12.9 4.3 L13.2 12.2 L5.5 12.2 Z"/><rect x="2.4" y="14.05" width="13.4" height="2.85"/></g></svg>
<svg class="ic" style="left:1060px;top:6.20px" width="18" height="18" viewBox="0 0 18 18"><path d="M3.4 13.4 L12.9 3.8 Q13.5 3.3 14.1 3.8 L16.6 6.3 Q17.1 6.9 16.6 7.5 L7.2 16.8 L3.4 16.8 Z" fill="#2b2b2b"/><path d="M11.1 6.4 L14.1 9.4" stroke="#fff" stroke-width="0.7" opacity="0.8"/><path d="M5.4 12.8 L11 7.2" stroke="#fff" stroke-width="0.6" stroke-dasharray="0.8 0.8" opacity="0.6"/><path d="M4.3 13.6 L6.5 15.8 L4.3 15.8 Z" fill="#fff" opacity="0.9"/></svg>
<svg class="ic" style="left:1087px;top:4.30px" width="20" height="20" viewBox="0 0 20 20"><g fill="none" stroke="#2e2e2e" stroke-width="1.2"><path d="M4.0 6.5 H16.9"/><path d="M8.6 6.5 V4.6 H13.1 V6.5"/><path d="M5.9 9.8 H15.2 V17.4 Q15.2 18.1 14.5 18.1 H6.6 Q5.9 18.1 5.9 17.4 Z"/><path d="M8.3 10 V18 M10.55 10 V18 M12.85 10 V18" stroke-width="1"/></g></svg>
</div>
<div class="row" style="top:354.600px">
<div class="td" style="left:10px;top:1px;letter-spacing:-0.534px">VIP All Gym - Bill weekly SPECIAL</div>
<div class="td" style="left:425px;top:1px;letter-spacing:-1.1px">IHRSA</div>
<div class="td" style="left:645px;top:1px;letter-spacing:0px">1</div>
<div class="td" style="left:722px;top:1px;letter-spacing:0px">$25.00</div>
<svg class="ic" style="left:822px;top:6.10px" width="20" height="20" viewBox="0 0 20 20"><path d="M6.5 6.7 L14.2 14.4 M14.2 6.7 L6.5 14.4" fill="none" stroke="#ff0000" stroke-width="3.2" stroke-linecap="round"/></svg>
<svg class="ic" style="left:982px;top:10.30px" width="17" height="13" viewBox="0 0 17 13"><path d="M1.8 6.5 C4 3.5 6 1.42 8.5 1.42 C11 1.42 13 3.5 15.2 6.5 C13 9.5 11 11.57 8.5 11.57 C6 11.57 4 9.5 1.8 6.5 Z" fill="none" stroke="#1b1a32" stroke-width="1.6" stroke-linejoin="round"/><circle cx="8.5" cy="4.8" r="3.4" fill="#1b1a32"/><circle cx="6.9" cy="5.9" r="1.1" fill="#fff"/></svg>
<svg class="ic" style="left:1010px;top:9.30px" width="15" height="15" viewBox="0 0 15 15"><g fill="none" stroke="#1b1a32" stroke-width="1.6" stroke-linecap="butt" transform="translate(7.58 7.41) scale(1.2) translate(-7.5 -7.73)"><path d="M6.72 7.78 L6.14 7.20 Q5.22 6.28 6.14 5.36 L8.62 2.89 Q9.54 1.97 10.46 2.89 L11.47 3.90 Q12.39 4.82 11.47 5.74 L11.00 6.20"/><path d="M8.00 6.29 L8.87 7.15 Q9.79 8.06 8.87 8.98 L6.23 11.62 Q5.31 12.54 4.39 11.62 L3.54 10.77 Q2.62 9.85 3.54 8.93 L3.84 8.64"/></g></svg>
<svg class="ic" style="left:1034px;top:6.00px" width="18" height="18" viewBox="0 0 18 18"><g fill="#262626"><path d="M3.7 5.1 L6.1 2.7 L7.1 3.7 L4.7 6.1 Z"/><path d="M6.26 7.35 L8.38 5.23 L10.58 7.43 L8.46 9.55 Z"/><path d="M12.9 4.3 L13.2 12.2 L5.5 12.2 Z"/><rect x="2.4" y="14.05" width="13.4" height="2.85"/></g></svg>
<svg class="ic" style="left:1060px;top:6.20px" width="18" height="18" viewBox="0 0 18 18"><path d="M3.4 13.4 L12.9 3.8 Q13.5 3.3 14.1 3.8 L16.6 6.3 Q17.1 6.9 16.6 7.5 L7.2 16.8 L3.4 16.8 Z" fill="#2b2b2b"/><path d="M11.1 6.4 L14.1 9.4" stroke="#fff" stroke-width="0.7" opacity="0.8"/><path d="M5.4 12.8 L11 7.2" stroke="#fff" stroke-width="0.6" stroke-dasharray="0.8 0.8" opacity="0.6"/><path d="M4.3 13.6 L6.5 15.8 L4.3 15.8 Z" fill="#fff" opacity="0.9"/></svg>
<svg class="ic" style="left:1087px;top:4.30px" width="20" height="20" viewBox="0 0 20 20"><g fill="none" stroke="#2e2e2e" stroke-width="1.2"><path d="M4.0 6.5 H16.9"/><path d="M8.6 6.5 V4.6 H13.1 V6.5"/><path d="M5.9 9.8 H15.2 V17.4 Q15.2 18.1 14.5 18.1 H6.6 Q5.9 18.1 5.9 17.4 Z"/><path d="M8.3 10 V18 M10.55 10 V18 M12.85 10 V18" stroke-width="1"/></g></svg>
</div>
<div class="row odd" style="top:390.163px">
<div class="td" style="left:10px;top:1px;letter-spacing:-0.381px">Bronze Membership Bi-Weekly</div>
<div class="td" style="left:425px;top:1px;letter-spacing:-1.1px">IHRSA</div>
<div class="td" style="left:645px;top:1px;letter-spacing:0px">13</div>
<div class="td" style="left:722px;top:1px;letter-spacing:0px">$39.95</div>
<svg class="ic" style="left:822px;top:6.10px" width="20" height="20" viewBox="0 0 20 20"><path d="M6.5 6.7 L14.2 14.4 M14.2 6.7 L6.5 14.4" fill="none" stroke="#ff0000" stroke-width="3.2" stroke-linecap="round"/></svg>
<svg class="ic" style="left:982px;top:10.30px" width="17" height="13" viewBox="0 0 17 13"><path d="M1.8 6.5 C4 3.5 6 1.42 8.5 1.42 C11 1.42 13 3.5 15.2 6.5 C13 9.5 11 11.57 8.5 11.57 C6 11.57 4 9.5 1.8 6.5 Z" fill="none" stroke="#1b1a32" stroke-width="1.6" stroke-linejoin="round"/><circle cx="8.5" cy="4.8" r="3.4" fill="#1b1a32"/><circle cx="6.9" cy="5.9" r="1.1" fill="#fff"/></svg>
<svg class="ic" style="left:1010px;top:9.30px" width="15" height="15" viewBox="0 0 15 15"><g fill="none" stroke="#1b1a32" stroke-width="1.6" stroke-linecap="butt" transform="translate(7.58 7.41) scale(1.2) translate(-7.5 -7.73)"><path d="M6.72 7.78 L6.14 7.20 Q5.22 6.28 6.14 5.36 L8.62 2.89 Q9.54 1.97 10.46 2.89 L11.47 3.90 Q12.39 4.82 11.47 5.74 L11.00 6.20"/><path d="M8.00 6.29 L8.87 7.15 Q9.79 8.06 8.87 8.98 L6.23 11.62 Q5.31 12.54 4.39 11.62 L3.54 10.77 Q2.62 9.85 3.54 8.93 L3.84 8.64"/></g></svg>
<svg class="ic" style="left:1034px;top:6.00px" width="18" height="18" viewBox="0 0 18 18"><g fill="#262626"><path d="M3.7 5.1 L6.1 2.7 L7.1 3.7 L4.7 6.1 Z"/><path d="M6.26 7.35 L8.38 5.23 L10.58 7.43 L8.46 9.55 Z"/><path d="M12.9 4.3 L13.2 12.2 L5.5 12.2 Z"/><rect x="2.4" y="14.05" width="13.4" height="2.85"/></g></svg>
<svg class="ic" style="left:1060px;top:6.20px" width="18" height="18" viewBox="0 0 18 18"><path d="M3.4 13.4 L12.9 3.8 Q13.5 3.3 14.1 3.8 L16.6 6.3 Q17.1 6.9 16.6 7.5 L7.2 16.8 L3.4 16.8 Z" fill="#2b2b2b"/><path d="M11.1 6.4 L14.1 9.4" stroke="#fff" stroke-width="0.7" opacity="0.8"/><path d="M5.4 12.8 L11 7.2" stroke="#fff" stroke-width="0.6" stroke-dasharray="0.8 0.8" opacity="0.6"/><path d="M4.3 13.6 L6.5 15.8 L4.3 15.8 Z" fill="#fff" opacity="0.9"/></svg>
<svg class="ic" style="left:1087px;top:4.30px" width="20" height="20" viewBox="0 0 20 20"><g fill="none" stroke="#2e2e2e" stroke-width="1.2"><path d="M4.0 6.5 H16.9"/><path d="M8.6 6.5 V4.6 H13.1 V6.5"/><path d="M5.9 9.8 H15.2 V17.4 Q15.2 18.1 14.5 18.1 H6.6 Q5.9 18.1 5.9 17.4 Z"/><path d="M8.3 10 V18 M10.55 10 V18 M12.85 10 V18" stroke-width="1"/></g></svg>
</div>
<div class="row" style="top:425.725px">
<div class="td" style="left:10px;top:1px;letter-spacing:-0.34px">SilverMembership Bi-Weekly</div>
<div class="td" style="left:425px;top:1px;letter-spacing:-1.1px">IHRSA</div>
<div class="td" style="left:645px;top:1px;letter-spacing:0px">1</div>
<div class="td" style="left:722px;top:1px;letter-spacing:0px">$39.95</div>
<svg class="ic" style="left:822px;top:6.10px" width="20" height="20" viewBox="0 0 20 20"><path d="M6.5 6.7 L14.2 14.4 M14.2 6.7 L6.5 14.4" fill="none" stroke="#ff0000" stroke-width="3.2" stroke-linecap="round"/></svg>
<svg class="ic" style="left:982px;top:10.30px" width="17" height="13" viewBox="0 0 17 13"><path d="M1.8 6.5 C4 3.5 6 1.42 8.5 1.42 C11 1.42 13 3.5 15.2 6.5 C13 9.5 11 11.57 8.5 11.57 C6 11.57 4 9.5 1.8 6.5 Z" fill="none" stroke="#1b1a32" stroke-width="1.6" stroke-linejoin="round"/><circle cx="8.5" cy="4.8" r="3.4" fill="#1b1a32"/><circle cx="6.9" cy="5.9" r="1.1" fill="#fff"/></svg>
<svg class="ic" style="left:1010px;top:9.30px" width="15" height="15" viewBox="0 0 15 15"><g fill="none" stroke="#1b1a32" stroke-width="1.6" stroke-linecap="butt" transform="translate(7.58 7.41) scale(1.2) translate(-7.5 -7.73)"><path d="M6.72 7.78 L6.14 7.20 Q5.22 6.28 6.14 5.36 L8.62 2.89 Q9.54 1.97 10.46 2.89 L11.47 3.90 Q12.39 4.82 11.47 5.74 L11.00 6.20"/><path d="M8.00 6.29 L8.87 7.15 Q9.79 8.06 8.87 8.98 L6.23 11.62 Q5.31 12.54 4.39 11.62 L3.54 10.77 Q2.62 9.85 3.54 8.93 L3.84 8.64"/></g></svg>
<svg class="ic" style="left:1034px;top:6.00px" width="18" height="18" viewBox="0 0 18 18"><g fill="#262626"><path d="M3.7 5.1 L6.1 2.7 L7.1 3.7 L4.7 6.1 Z"/><path d="M6.26 7.35 L8.38 5.23 L10.58 7.43 L8.46 9.55 Z"/><path d="M12.9 4.3 L13.2 12.2 L5.5 12.2 Z"/><rect x="2.4" y="14.05" width="13.4" height="2.85"/></g></svg>
<svg class="ic" style="left:1060px;top:6.20px" width="18" height="18" viewBox="0 0 18 18"><path d="M3.4 13.4 L12.9 3.8 Q13.5 3.3 14.1 3.8 L16.6 6.3 Q17.1 6.9 16.6 7.5 L7.2 16.8 L3.4 16.8 Z" fill="#2b2b2b"/><path d="M11.1 6.4 L14.1 9.4" stroke="#fff" stroke-width="0.7" opacity="0.8"/><path d="M5.4 12.8 L11 7.2" stroke="#fff" stroke-width="0.6" stroke-dasharray="0.8 0.8" opacity="0.6"/><path d="M4.3 13.6 L6.5 15.8 L4.3 15.8 Z" fill="#fff" opacity="0.9"/></svg>
<svg class="ic" style="left:1087px;top:4.30px" width="20" height="20" viewBox="0 0 20 20"><g fill="none" stroke="#2e2e2e" stroke-width="1.2"><path d="M4.0 6.5 H16.9"/><path d="M8.6 6.5 V4.6 H13.1 V6.5"/><path d="M5.9 9.8 H15.2 V17.4 Q15.2 18.1 14.5 18.1 H6.6 Q5.9 18.1 5.9 17.4 Z"/><path d="M8.3 10 V18 M10.55 10 V18 M12.85 10 V18" stroke-width="1"/></g></svg>
</div>
<div class="row odd" style="top:461.288px">
<div class="td" style="left:10px;top:1px;letter-spacing:-0.44px">VIP All Gym - Month to Month SPECIAL</div>
<div class="td" style="left:425px;top:1px;letter-spacing:-1.1px">IHRSA</div>
<div class="td" style="left:645px;top:1px;letter-spacing:0px">0</div>
<div class="td" style="left:722px;top:1px;letter-spacing:0px">$59.00</div>
<svg class="ic" style="left:822px;top:6.10px" width="20" height="20" viewBox="0 0 20 20"><path d="M6.5 6.7 L14.2 14.4 M14.2 6.7 L6.5 14.4" fill="none" stroke="#ff0000" stroke-width="3.2" stroke-linecap="round"/></svg>
<svg class="ic" style="left:982px;top:10.30px" width="17" height="13" viewBox="0 0 17 13"><path d="M1.8 6.5 C4 3.5 6 1.42 8.5 1.42 C11 1.42 13 3.5 15.2 6.5 C13 9.5 11 11.57 8.5 11.57 C6 11.57 4 9.5 1.8 6.5 Z" fill="none" stroke="#1b1a32" stroke-width="1.6" stroke-linejoin="round"/><circle cx="8.5" cy="4.8" r="3.4" fill="#1b1a32"/><circle cx="6.9" cy="5.9" r="1.1" fill="#fff"/></svg>
<svg class="ic" style="left:1010px;top:9.30px" width="15" height="15" viewBox="0 0 15 15"><g fill="none" stroke="#1b1a32" stroke-width="1.6" stroke-linecap="butt" transform="translate(7.58 7.41) scale(1.2) translate(-7.5 -7.73)"><path d="M6.72 7.78 L6.14 7.20 Q5.22 6.28 6.14 5.36 L8.62 2.89 Q9.54 1.97 10.46 2.89 L11.47 3.90 Q12.39 4.82 11.47 5.74 L11.00 6.20"/><path d="M8.00 6.29 L8.87 7.15 Q9.79 8.06 8.87 8.98 L6.23 11.62 Q5.31 12.54 4.39 11.62 L3.54 10.77 Q2.62 9.85 3.54 8.93 L3.84 8.64"/></g></svg>
<svg class="ic" style="left:1034px;top:6.00px" width="18" height="18" viewBox="0 0 18 18"><g fill="#262626"><path d="M3.7 5.1 L6.1 2.7 L7.1 3.7 L4.7 6.1 Z"/><path d="M6.26 7.35 L8.38 5.23 L10.58 7.43 L8.46 9.55 Z"/><path d="M12.9 4.3 L13.2 12.2 L5.5 12.2 Z"/><rect x="2.4" y="14.05" width="13.4" height="2.85"/></g></svg>
<svg class="ic" style="left:1060px;top:6.20px" width="18" height="18" viewBox="0 0 18 18"><path d="M3.4 13.4 L12.9 3.8 Q13.5 3.3 14.1 3.8 L16.6 6.3 Q17.1 6.9 16.6 7.5 L7.2 16.8 L3.4 16.8 Z" fill="#2b2b2b"/><path d="M11.1 6.4 L14.1 9.4" stroke="#fff" stroke-width="0.7" opacity="0.8"/><path d="M5.4 12.8 L11 7.2" stroke="#fff" stroke-width="0.6" stroke-dasharray="0.8 0.8" opacity="0.6"/><path d="M4.3 13.6 L6.5 15.8 L4.3 15.8 Z" fill="#fff" opacity="0.9"/></svg>
<svg class="ic" style="left:1087px;top:4.30px" width="20" height="20" viewBox="0 0 20 20"><g fill="none" stroke="#2e2e2e" stroke-width="1.2"><path d="M4.0 6.5 H16.9"/><path d="M8.6 6.5 V4.6 H13.1 V6.5"/><path d="M5.9 9.8 H15.2 V17.4 Q15.2 18.1 14.5 18.1 H6.6 Q5.9 18.1 5.9 17.4 Z"/><path d="M8.3 10 V18 M10.55 10 V18 M12.85 10 V18" stroke-width="1"/></g></svg>
</div>
<div class="row" style="top:496.850px">
<div class="td" style="left:10px;top:1px;letter-spacing:-0.204px">All Location - Month to Month</div>
<div class="td" style="left:425px;top:1px;letter-spacing:-1.1px">IHRSA</div>
<div class="td" style="left:645px;top:1px;letter-spacing:0px">7</div>
<div class="td" style="left:722px;top:1px;letter-spacing:0px">$100.00</div>
<svg class="ic" style="left:822px;top:6.10px" width="20" height="20" viewBox="0 0 20 20"><path d="M6.5 6.7 L14.2 14.4 M14.2 6.7 L6.5 14.4" fill="none" stroke="#ff0000" stroke-width="3.2" stroke-linecap="round"/></svg>
<svg class="ic" style="left:982px;top:10.30px" width="17" height="13" viewBox="0 0 17 13"><path d="M1.8 6.5 C4 3.5 6 1.42 8.5 1.42 C11 1.42 13 3.5 15.2 6.5 C13 9.5 11 11.57 8.5 11.57 C6 11.57 4 9.5 1.8 6.5 Z" fill="none" stroke="#1b1a32" stroke-width="1.6" stroke-linejoin="round"/><circle cx="8.5" cy="4.8" r="3.4" fill="#1b1a32"/><circle cx="6.9" cy="5.9" r="1.1" fill="#fff"/></svg>
<svg class="ic" style="left:1010px;top:9.30px" width="15" height="15" viewBox="0 0 15 15"><g fill="none" stroke="#1b1a32" stroke-width="1.6" stroke-linecap="butt" transform="translate(7.58 7.41) scale(1.2) translate(-7.5 -7.73)"><path d="M6.72 7.78 L6.14 7.20 Q5.22 6.28 6.14 5.36 L8.62 2.89 Q9.54 1.97 10.46 2.89 L11.47 3.90 Q12.39 4.82 11.47 5.74 L11.00 6.20"/><path d="M8.00 6.29 L8.87 7.15 Q9.79 8.06 8.87 8.98 L6.23 11.62 Q5.31 12.54 4.39 11.62 L3.54 10.77 Q2.62 9.85 3.54 8.93 L3.84 8.64"/></g></svg>
<svg class="ic" style="left:1034px;top:6.00px" width="18" height="18" viewBox="0 0 18 18"><g fill="#262626"><path d="M3.7 5.1 L6.1 2.7 L7.1 3.7 L4.7 6.1 Z"/><path d="M6.26 7.35 L8.38 5.23 L10.58 7.43 L8.46 9.55 Z"/><path d="M12.9 4.3 L13.2 12.2 L5.5 12.2 Z"/><rect x="2.4" y="14.05" width="13.4" height="2.85"/></g></svg>
<svg class="ic" style="left:1060px;top:6.20px" width="18" height="18" viewBox="0 0 18 18"><path d="M3.4 13.4 L12.9 3.8 Q13.5 3.3 14.1 3.8 L16.6 6.3 Q17.1 6.9 16.6 7.5 L7.2 16.8 L3.4 16.8 Z" fill="#2b2b2b"/><path d="M11.1 6.4 L14.1 9.4" stroke="#fff" stroke-width="0.7" opacity="0.8"/><path d="M5.4 12.8 L11 7.2" stroke="#fff" stroke-width="0.6" stroke-dasharray="0.8 0.8" opacity="0.6"/><path d="M4.3 13.6 L6.5 15.8 L4.3 15.8 Z" fill="#fff" opacity="0.9"/></svg>
<svg class="ic" style="left:1087px;top:4.30px" width="20" height="20" viewBox="0 0 20 20"><g fill="none" stroke="#2e2e2e" stroke-width="1.2"><path d="M4.0 6.5 H16.9"/><path d="M8.6 6.5 V4.6 H13.1 V6.5"/><path d="M5.9 9.8 H15.2 V17.4 Q15.2 18.1 14.5 18.1 H6.6 Q5.9 18.1 5.9 17.4 Z"/><path d="M8.3 10 V18 M10.55 10 V18 M12.85 10 V18" stroke-width="1"/></g></svg>
</div>
<div class="row odd" style="top:532.413px">
<div class="td" style="left:10px;top:1px;letter-spacing:-0.263px">Intro Offer - 1 week for $25</div>
<div class="td" style="left:425px;top:1px;letter-spacing:-0.082px">Intro Offers</div>
<div class="td" style="left:645px;top:1px;letter-spacing:0px">0</div>
<div class="td" style="left:722px;top:1px;letter-spacing:0px">$25.00</div>
<svg class="ic" style="left:822px;top:5.60px" width="20" height="20" viewBox="0 0 20 20"><path d="M4.9 11.4 L7.0 9.5 L10.4 12.8 L16.8 6.1 L19 8.3 L10.4 16.9 Z" fill="#008000"/></svg>
<svg class="ic" style="left:982px;top:10.30px" width="17" height="13" viewBox="0 0 17 13"><path d="M1.8 6.5 C4 3.5 6 1.42 8.5 1.42 C11 1.42 13 3.5 15.2 6.5 C13 9.5 11 11.57 8.5 11.57 C6 11.57 4 9.5 1.8 6.5 Z" fill="none" stroke="#1b1a32" stroke-width="1.6" stroke-linejoin="round"/><circle cx="8.5" cy="4.8" r="3.4" fill="#1b1a32"/><circle cx="6.9" cy="5.9" r="1.1" fill="#fff"/></svg>
<svg class="ic" style="left:1010px;top:9.30px" width="15" height="15" viewBox="0 0 15 15"><g fill="none" stroke="#1b1a32" stroke-width="1.6" stroke-linecap="butt" transform="translate(7.58 7.41) scale(1.2) translate(-7.5 -7.73)"><path d="M6.72 7.78 L6.14 7.20 Q5.22 6.28 6.14 5.36 L8.62 2.89 Q9.54 1.97 10.46 2.89 L11.47 3.90 Q12.39 4.82 11.47 5.74 L11.00 6.20"/><path d="M8.00 6.29 L8.87 7.15 Q9.79 8.06 8.87 8.98 L6.23 11.62 Q5.31 12.54 4.39 11.62 L3.54 10.77 Q2.62 9.85 3.54 8.93 L3.84 8.64"/></g></svg>
<svg class="ic" style="left:1034px;top:6.00px" width="18" height="18" viewBox="0 0 18 18"><g fill="#262626"><path d="M3.7 5.1 L6.1 2.7 L7.1 3.7 L4.7 6.1 Z"/><path d="M6.26 7.35 L8.38 5.23 L10.58 7.43 L8.46 9.55 Z"/><path d="M12.9 4.3 L13.2 12.2 L5.5 12.2 Z"/><rect x="2.4" y="14.05" width="13.4" height="2.85"/></g></svg>
<svg class="ic" style="left:1060px;top:6.20px" width="18" height="18" viewBox="0 0 18 18"><path d="M3.4 13.4 L12.9 3.8 Q13.5 3.3 14.1 3.8 L16.6 6.3 Q17.1 6.9 16.6 7.5 L7.2 16.8 L3.4 16.8 Z" fill="#2b2b2b"/><path d="M11.1 6.4 L14.1 9.4" stroke="#fff" stroke-width="0.7" opacity="0.8"/><path d="M5.4 12.8 L11 7.2" stroke="#fff" stroke-width="0.6" stroke-dasharray="0.8 0.8" opacity="0.6"/><path d="M4.3 13.6 L6.5 15.8 L4.3 15.8 Z" fill="#fff" opacity="0.9"/></svg>
<svg class="ic" style="left:1087px;top:4.30px" width="20" height="20" viewBox="0 0 20 20"><g fill="none" stroke="#2e2e2e" stroke-width="1.2"><path d="M4.0 6.5 H16.9"/><path d="M8.6 6.5 V4.6 H13.1 V6.5"/><path d="M5.9 9.8 H15.2 V17.4 Q15.2 18.1 14.5 18.1 H6.6 Q5.9 18.1 5.9 17.4 Z"/><path d="M8.3 10 V18 M10.55 10 V18 M12.85 10 V18" stroke-width="1"/></g></svg>
</div>
<div class="row" style="top:567.975px">
<div class="td" style="left:10px;top:1px;letter-spacing:-0.255px">Child Add-On Membership</div>
<div class="td" style="left:425px;top:1px;letter-spacing:-0.35px">Memberships</div>
<div class="td" style="left:645px;top:1px;letter-spacing:0px">2</div>
<div class="td" style="left:722px;top:1px;letter-spacing:0px">$0.00</div>
<svg class="ic" style="left:822px;top:6.10px" width="20" height="20" viewBox="0 0 20 20"><path d="M6.5 6.7 L14.2 14.4 M14.2 6.7 L6.5 14.4" fill="none" stroke="#ff0000" stroke-width="3.2" stroke-linecap="round"/></svg>
<svg class="ic" style="left:982px;top:10.30px" width="17" height="13" viewBox="0 0 17 13"><path d="M1.8 6.5 C4 3.5 6 1.42 8.5 1.42 C11 1.42 13 3.5 15.2 6.5 C13 9.5 11 11.57 8.5 11.57 C6 11.57 4 9.5 1.8 6.5 Z" fill="none" stroke="#1b1a32" stroke-width="1.6" stroke-linejoin="round"/><circle cx="8.5" cy="4.8" r="3.4" fill="#1b1a32"/><circle cx="6.9" cy="5.9" r="1.1" fill="#fff"/></svg>
<svg class="ic" style="left:1010px;top:9.30px" width="15" height="15" viewBox="0 0 15 15"><g fill="none" stroke="#1b1a32" stroke-width="1.6" stroke-linecap="butt" transform="translate(7.58 7.41) scale(1.2) translate(-7.5 -7.73)"><path d="M6.72 7.78 L6.14 7.20 Q5.22 6.28 6.14 5.36 L8.62 2.89 Q9.54 1.97 10.46 2.89 L11.47 3.90 Q12.39 4.82 11.47 5.74 L11.00 6.20"/><path d="M8.00 6.29 L8.87 7.15 Q9.79 8.06 8.87 8.98 L6.23 11.62 Q5.31 12.54 4.39 11.62 L3.54 10.77 Q2.62 9.85 3.54 8.93 L3.84 8.64"/></g></svg>
<svg class="ic" style="left:1034px;top:6.00px" width="18" height="18" viewBox="0 0 18 18"><g fill="#262626"><path d="M3.7 5.1 L6.1 2.7 L7.1 3.7 L4.7 6.1 Z"/><path d="M6.26 7.35 L8.38 5.23 L10.58 7.43 L8.46 9.55 Z"/><path d="M12.9 4.3 L13.2 12.2 L5.5 12.2 Z"/><rect x="2.4" y="14.05" width="13.4" height="2.85"/></g></svg>
<svg class="ic" style="left:1060px;top:6.20px" width="18" height="18" viewBox="0 0 18 18"><path d="M3.4 13.4 L12.9 3.8 Q13.5 3.3 14.1 3.8 L16.6 6.3 Q17.1 6.9 16.6 7.5 L7.2 16.8 L3.4 16.8 Z" fill="#2b2b2b"/><path d="M11.1 6.4 L14.1 9.4" stroke="#fff" stroke-width="0.7" opacity="0.8"/><path d="M5.4 12.8 L11 7.2" stroke="#fff" stroke-width="0.6" stroke-dasharray="0.8 0.8" opacity="0.6"/><path d="M4.3 13.6 L6.5 15.8 L4.3 15.8 Z" fill="#fff" opacity="0.9"/></svg>
<svg class="ic" style="left:1087px;top:4.30px" width="20" height="20" viewBox="0 0 20 20"><g fill="none" stroke="#2e2e2e" stroke-width="1.2"><path d="M4.0 6.5 H16.9"/><path d="M8.6 6.5 V4.6 H13.1 V6.5"/><path d="M5.9 9.8 H15.2 V17.4 Q15.2 18.1 14.5 18.1 H6.6 Q5.9 18.1 5.9 17.4 Z"/><path d="M8.3 10 V18 M10.55 10 V18 M12.85 10 V18" stroke-width="1"/></g></svg>
</div>
<div class="row odd" style="top:603.538px">
<div class="td" style="left:10px;top:1px;letter-spacing:-0.393px">LIMITED credits</div>
<div class="td" style="left:425px;top:1px;letter-spacing:-0.35px">Memberships</div>
<div class="td" style="left:645px;top:1px;letter-spacing:0px">1</div>
<div class="td" style="left:722px;top:1px;letter-spacing:0px">$1.00</div>
<svg class="ic" style="left:822px;top:6.10px" width="20" height="20" viewBox="0 0 20 20"><path d="M6.5 6.7 L14.2 14.4 M14.2 6.7 L6.5 14.4" fill="none" stroke="#ff0000" stroke-width="3.2" stroke-linecap="round"/></svg>
<svg class="ic" style="left:982px;top:10.30px" width="17" height="13" viewBox="0 0 17 13"><path d="M1.8 6.5 C4 3.5 6 1.42 8.5 1.42 C11 1.42 13 3.5 15.2 6.5 C13 9.5 11 11.57 8.5 11.57 C6 11.57 4 9.5 1.8 6.5 Z" fill="none" stroke="#1b1a32" stroke-width="1.6" stroke-linejoin="round"/><circle cx="8.5" cy="4.8" r="3.4" fill="#1b1a32"/><circle cx="6.9" cy="5.9" r="1.1" fill="#fff"/></svg>
<svg class="ic" style="left:1010px;top:9.30px" width="15" height="15" viewBox="0 0 15 15"><g fill="none" stroke="#1b1a32" stroke-width="1.6" stroke-linecap="butt" transform="translate(7.58 7.41) scale(1.2) translate(-7.5 -7.73)"><path d="M6.72 7.78 L6.14 7.20 Q5.22 6.28 6.14 5.36 L8.62 2.89 Q9.54 1.97 10.46 2.89 L11.47 3.90 Q12.39 4.82 11.47 5.74 L11.00 6.20"/><path d="M8.00 6.29 L8.87 7.15 Q9.79 8.06 8.87 8.98 L6.23 11.62 Q5.31 12.54 4.39 11.62 L3.54 10.77 Q2.62 9.85 3.54 8.93 L3.84 8.64"/></g></svg>
<svg class="ic" style="left:1034px;top:6.00px" width="18" height="18" viewBox="0 0 18 18"><g fill="#262626"><path d="M3.7 5.1 L6.1 2.7 L7.1 3.7 L4.7 6.1 Z"/><path d="M6.26 7.35 L8.38 5.23 L10.58 7.43 L8.46 9.55 Z"/><path d="M12.9 4.3 L13.2 12.2 L5.5 12.2 Z"/><rect x="2.4" y="14.05" width="13.4" height="2.85"/></g></svg>
<svg class="ic" style="left:1060px;top:6.20px" width="18" height="18" viewBox="0 0 18 18"><path d="M3.4 13.4 L12.9 3.8 Q13.5 3.3 14.1 3.8 L16.6 6.3 Q17.1 6.9 16.6 7.5 L7.2 16.8 L3.4 16.8 Z" fill="#2b2b2b"/><path d="M11.1 6.4 L14.1 9.4" stroke="#fff" stroke-width="0.7" opacity="0.8"/><path d="M5.4 12.8 L11 7.2" stroke="#fff" stroke-width="0.6" stroke-dasharray="0.8 0.8" opacity="0.6"/><path d="M4.3 13.6 L6.5 15.8 L4.3 15.8 Z" fill="#fff" opacity="0.9"/></svg>
<svg class="ic" style="left:1087px;top:4.30px" width="20" height="20" viewBox="0 0 20 20"><g fill="none" stroke="#2e2e2e" stroke-width="1.2"><path d="M4.0 6.5 H16.9"/><path d="M8.6 6.5 V4.6 H13.1 V6.5"/><path d="M5.9 9.8 H15.2 V17.4 Q15.2 18.1 14.5 18.1 H6.6 Q5.9 18.1 5.9 17.4 Z"/><path d="M8.3 10 V18 M10.55 10 V18 M12.85 10 V18" stroke-width="1"/></g></svg>
</div>
<div class="row" style="top:639.100px">
<div class="td" style="left:10px;top:1px;letter-spacing:-0.57px">U18 Silver Membership Bi Weekly</div>
<div class="td" style="left:425px;top:1px;letter-spacing:-0.35px">Memberships</div>
<div class="td" style="left:645px;top:1px;letter-spacing:0px">5</div>
<div class="td" style="left:722px;top:1px;letter-spacing:0px">$20.00</div>
<svg class="ic" style="left:822px;top:6.10px" width="20" height="20" viewBox="0 0 20 20"><path d="M6.5 6.7 L14.2 14.4 M14.2 6.7 L6.5 14.4" fill="none" stroke="#ff0000" stroke-width="3.2" stroke-linecap="round"/></svg>
<svg class="ic" style="left:982px;top:10.30px" width="17" height="13" viewBox="0 0 17 13"><path d="M1.8 6.5 C4 3.5 6 1.42 8.5 1.42 C11 1.42 13 3.5 15.2 6.5 C13 9.5 11 11.57 8.5 11.57 C6 11.57 4 9.5 1.8 6.5 Z" fill="none" stroke="#1b1a32" stroke-width="1.6" stroke-linejoin="round"/><circle cx="8.5" cy="4.8" r="3.4" fill="#1b1a32"/><circle cx="6.9" cy="5.9" r="1.1" fill="#fff"/></svg>
<svg class="ic" style="left:1010px;top:9.30px" width="15" height="15" viewBox="0 0 15 15"><g fill="none" stroke="#1b1a32" stroke-width="1.6" stroke-linecap="butt" transform="translate(7.58 7.41) scale(1.2) translate(-7.5 -7.73)"><path d="M6.72 7.78 L6.14 7.20 Q5.22 6.28 6.14 5.36 L8.62 2.89 Q9.54 1.97 10.46 2.89 L11.47 3.90 Q12.39 4.82 11.47 5.74 L11.00 6.20"/><path d="M8.00 6.29 L8.87 7.15 Q9.79 8.06 8.87 8.98 L6.23 11.62 Q5.31 12.54 4.39 11.62 L3.54 10.77 Q2.62 9.85 3.54 8.93 L3.84 8.64"/></g></svg>
<svg class="ic" style="left:1034px;top:6.00px" width="18" height="18" viewBox="0 0 18 18"><g fill="#262626"><path d="M3.7 5.1 L6.1 2.7 L7.1 3.7 L4.7 6.1 Z"/><path d="M6.26 7.35 L8.38 5.23 L10.58 7.43 L8.46 9.55 Z"/><path d="M12.9 4.3 L13.2 12.2 L5.5 12.2 Z"/><rect x="2.4" y="14.05" width="13.4" height="2.85"/></g></svg>
<svg class="ic" style="left:1060px;top:6.20px" width="18" height="18" viewBox="0 0 18 18"><path d="M3.4 13.4 L12.9 3.8 Q13.5 3.3 14.1 3.8 L16.6 6.3 Q17.1 6.9 16.6 7.5 L7.2 16.8 L3.4 16.8 Z" fill="#2b2b2b"/><path d="M11.1 6.4 L14.1 9.4" stroke="#fff" stroke-width="0.7" opacity="0.8"/><path d="M5.4 12.8 L11 7.2" stroke="#fff" stroke-width="0.6" stroke-dasharray="0.8 0.8" opacity="0.6"/><path d="M4.3 13.6 L6.5 15.8 L4.3 15.8 Z" fill="#fff" opacity="0.9"/></svg>
<svg class="ic" style="left:1087px;top:4.30px" width="20" height="20" viewBox="0 0 20 20"><g fill="none" stroke="#2e2e2e" stroke-width="1.2"><path d="M4.0 6.5 H16.9"/><path d="M8.6 6.5 V4.6 H13.1 V6.5"/><path d="M5.9 9.8 H15.2 V17.4 Q15.2 18.1 14.5 18.1 H6.6 Q5.9 18.1 5.9 17.4 Z"/><path d="M8.3 10 V18 M10.55 10 V18 M12.85 10 V18" stroke-width="1"/></g></svg>
</div>
<div class="row odd" style="top:674.663px">
<div class="td" style="left:10px;top:1px;letter-spacing:-0.9px">THE YEARLY</div>
<div class="td" style="left:425px;top:1px;letter-spacing:-0.35px">Memberships</div>
<div class="td" style="left:645px;top:1px;letter-spacing:0px">2</div>
<div class="td" style="left:722px;top:1px;letter-spacing:0px">$24.90</div>
<svg class="ic" style="left:822px;top:6.10px" width="20" height="20" viewBox="0 0 20 20"><path d="M6.5 6.7 L14.2 14.4 M14.2 6.7 L6.5 14.4" fill="none" stroke="#ff0000" stroke-width="3.2" stroke-linecap="round"/></svg>
<svg class="ic" style="left:982px;top:10.30px" width="17" height="13" viewBox="0 0 17 13"><path d="M1.8 6.5 C4 3.5 6 1.42 8.5 1.42 C11 1.42 13 3.5 15.2 6.5 C13 9.5 11 11.57 8.5 11.57 C6 11.57 4 9.5 1.8 6.5 Z" fill="none" stroke="#1b1a32" stroke-width="1.6" stroke-linejoin="round"/><circle cx="8.5" cy="4.8" r="3.4" fill="#1b1a32"/><circle cx="6.9" cy="5.9" r="1.1" fill="#fff"/></svg>
<svg class="ic" style="left:1010px;top:9.30px" width="15" height="15" viewBox="0 0 15 15"><g fill="none" stroke="#1b1a32" stroke-width="1.6" stroke-linecap="butt" transform="translate(7.58 7.41) scale(1.2) translate(-7.5 -7.73)"><path d="M6.72 7.78 L6.14 7.20 Q5.22 6.28 6.14 5.36 L8.62 2.89 Q9.54 1.97 10.46 2.89 L11.47 3.90 Q12.39 4.82 11.47 5.74 L11.00 6.20"/><path d="M8.00 6.29 L8.87 7.15 Q9.79 8.06 8.87 8.98 L6.23 11.62 Q5.31 12.54 4.39 11.62 L3.54 10.77 Q2.62 9.85 3.54 8.93 L3.84 8.64"/></g></svg>
<svg class="ic" style="left:1034px;top:6.00px" width="18" height="18" viewBox="0 0 18 18"><g fill="#262626"><path d="M3.7 5.1 L6.1 2.7 L7.1 3.7 L4.7 6.1 Z"/><path d="M6.26 7.35 L8.38 5.23 L10.58 7.43 L8.46 9.55 Z"/><path d="M12.9 4.3 L13.2 12.2 L5.5 12.2 Z"/><rect x="2.4" y="14.05" width="13.4" height="2.85"/></g></svg>
<svg class="ic" style="left:1060px;top:6.20px" width="18" height="18" viewBox="0 0 18 18"><path d="M3.4 13.4 L12.9 3.8 Q13.5 3.3 14.1 3.8 L16.6 6.3 Q17.1 6.9 16.6 7.5 L7.2 16.8 L3.4 16.8 Z" fill="#2b2b2b"/><path d="M11.1 6.4 L14.1 9.4" stroke="#fff" stroke-width="0.7" opacity="0.8"/><path d="M5.4 12.8 L11 7.2" stroke="#fff" stroke-width="0.6" stroke-dasharray="0.8 0.8" opacity="0.6"/><path d="M4.3 13.6 L6.5 15.8 L4.3 15.8 Z" fill="#fff" opacity="0.9"/></svg>
<svg class="ic" style="left:1087px;top:4.30px" width="20" height="20" viewBox="0 0 20 20"><g fill="none" stroke="#2e2e2e" stroke-width="1.2"><path d="M4.0 6.5 H16.9"/><path d="M8.6 6.5 V4.6 H13.1 V6.5"/><path d="M5.9 9.8 H15.2 V17.4 Q15.2 18.1 14.5 18.1 H6.6 Q5.9 18.1 5.9 17.4 Z"/><path d="M8.3 10 V18 M10.55 10 V18 M12.85 10 V18" stroke-width="1"/></g></svg>
</div>
<div class="row" style="top:710.225px">
<div class="td" style="left:10px;top:1px;letter-spacing:-0.462px">Silver Membership Bi Weekly</div>
<div class="td" style="left:425px;top:1px;letter-spacing:-0.35px">Memberships</div>
<div class="td" style="left:645px;top:1px;letter-spacing:0px">12</div>
<div class="td" style="left:722px;top:1px;letter-spacing:0px">$40.00</div>
<svg class="ic" style="left:822px;top:6.10px" width="20" height="20" viewBox="0 0 20 20"><path d="M6.5 6.7 L14.2 14.4 M14.2 6.7 L6.5 14.4" fill="none" stroke="#ff0000" stroke-width="3.2" stroke-linecap="round"/></svg>
<svg class="ic" style="left:982px;top:10.30px" width="17" height="13" viewBox="0 0 17 13"><path d="M1.8 6.5 C4 3.5 6 1.42 8.5 1.42 C11 1.42 13 3.5 15.2 6.5 C13 9.5 11 11.57 8.5 11.57 C6 11.57 4 9.5 1.8 6.5 Z" fill="none" stroke="#1b1a32" stroke-width="1.6" stroke-linejoin="round"/><circle cx="8.5" cy="4.8" r="3.4" fill="#1b1a32"/><circle cx="6.9" cy="5.9" r="1.1" fill="#fff"/></svg>
<svg class="ic" style="left:1010px;top:9.30px" width="15" height="15" viewBox="0 0 15 15"><g fill="none" stroke="#1b1a32" stroke-width="1.6" stroke-linecap="butt" transform="translate(7.58 7.41) scale(1.2) translate(-7.5 -7.73)"><path d="M6.72 7.78 L6.14 7.20 Q5.22 6.28 6.14 5.36 L8.62 2.89 Q9.54 1.97 10.46 2.89 L11.47 3.90 Q12.39 4.82 11.47 5.74 L11.00 6.20"/><path d="M8.00 6.29 L8.87 7.15 Q9.79 8.06 8.87 8.98 L6.23 11.62 Q5.31 12.54 4.39 11.62 L3.54 10.77 Q2.62 9.85 3.54 8.93 L3.84 8.64"/></g></svg>
<svg class="ic" style="left:1034px;top:6.00px" width="18" height="18" viewBox="0 0 18 18"><g fill="#262626"><path d="M3.7 5.1 L6.1 2.7 L7.1 3.7 L4.7 6.1 Z"/><path d="M6.26 7.35 L8.38 5.23 L10.58 7.43 L8.46 9.55 Z"/><path d="M12.9 4.3 L13.2 12.2 L5.5 12.2 Z"/><rect x="2.4" y="14.05" width="13.4" height="2.85"/></g></svg>
<svg class="ic" style="left:1060px;top:6.20px" width="18" height="18" viewBox="0 0 18 18"><path d="M3.4 13.4 L12.9 3.8 Q13.5 3.3 14.1 3.8 L16.6 6.3 Q17.1 6.9 16.6 7.5 L7.2 16.8 L3.4 16.8 Z" fill="#2b2b2b"/><path d="M11.1 6.4 L14.1 9.4" stroke="#fff" stroke-width="0.7" opacity="0.8"/><path d="M5.4 12.8 L11 7.2" stroke="#fff" stroke-width="0.6" stroke-dasharray="0.8 0.8" opacity="0.6"/><path d="M4.3 13.6 L6.5 15.8 L4.3 15.8 Z" fill="#fff" opacity="0.9"/></svg>
<svg class="ic" style="left:1087px;top:4.30px" width="20" height="20" viewBox="0 0 20 20"><g fill="none" stroke="#2e2e2e" stroke-width="1.2"><path d="M4.0 6.5 H16.9"/><path d="M8.6 6.5 V4.6 H13.1 V6.5"/><path d="M5.9 9.8 H15.2 V17.4 Q15.2 18.1 14.5 18.1 H6.6 Q5.9 18.1 5.9 17.4 Z"/><path d="M8.3 10 V18 M10.55 10 V18 M12.85 10 V18" stroke-width="1"/></g></svg>
</div>
<div class="row odd" style="top:745.788px">
</div>
</div>
<svg class="abs" style="left:0;top:0" width="1541" height="911" viewBox="0 0 1541 911"><defs><clipPath id="cp"><rect x="0" y="0" width="1541" height="229.6"/></clipPath></defs><g fill="#dd2c2c"><path d="M1329.46 167.64 L1430.8 218.3 L1428.8 222.3 L1327.44 171.66 Z"/><path d="M1434.4 211.1 L1448.2 229.5 L1425.2 229.5 Z"/></g><rect x="1461.5" y="235.4" width="19" height="21.2" rx="8.6" ry="9.6" fill="none" stroke="#dc2a2c" stroke-width="3"/></svg>
<div class="abs" style="left:1452px;top:208px;width:37px;height:21.5px;background:#161616;border-radius:4px;color:#fff;font-size:11px;font-weight:bold;text-align:center;line-height:22.5px">Edit</div>
<svg class="abs" style="left:1464px;top:229.5px" width="12" height="5" viewBox="0 0 12 5"><path d="M0.5 0 H11.5 L6 4.5 Z" fill="#2c2b45"/></svg>
<div class="abs" style="left:1213px;top:838.5px;width:64px;height:48.5px;border-radius:24px;background:#fff;box-shadow:0 1px 6px rgba(0,0,0,0.12)"></div>
<svg class="abs" style="left:1231px;top:852px" width="28" height="22" viewBox="0 0 28 22"><g fill="none" stroke="#e47b1c" stroke-width="1.6"><path d="M0.8 4.5 V0.8 H4.5 M23.5 0.8 H27.2 V4.5 M27.2 17.5 V21.2 H23.5 M4.5 21.2 H0.8 V17.5"/></g><g fill="#e47b1c"><rect x="3.5" y="3.5" width="2" height="15"/><rect x="7.3" y="3.5" width="1.3" height="2"/><rect x="7.3" y="7" width="1.3" height="11.5"/><rect x="10.5" y="3.5" width="1.3" height="2"/><rect x="10.5" y="7" width="1.3" height="11.5"/><rect x="13.7" y="3.5" width="1.6" height="15"/><rect x="17" y="3.5" width="1.3" height="2"/><rect x="17" y="7" width="1.3" height="11.5"/><rect x="20.5" y="3.5" width="2" height="15"/></g></svg>
<div class="abs" style="left:1260px;top:875px;width:20px;height:20px;border-radius:50%;background:#e47b1c;color:#fff;font-size:12px;font-weight:bold;text-align:center;line-height:20px">1</div>
</body></html>
